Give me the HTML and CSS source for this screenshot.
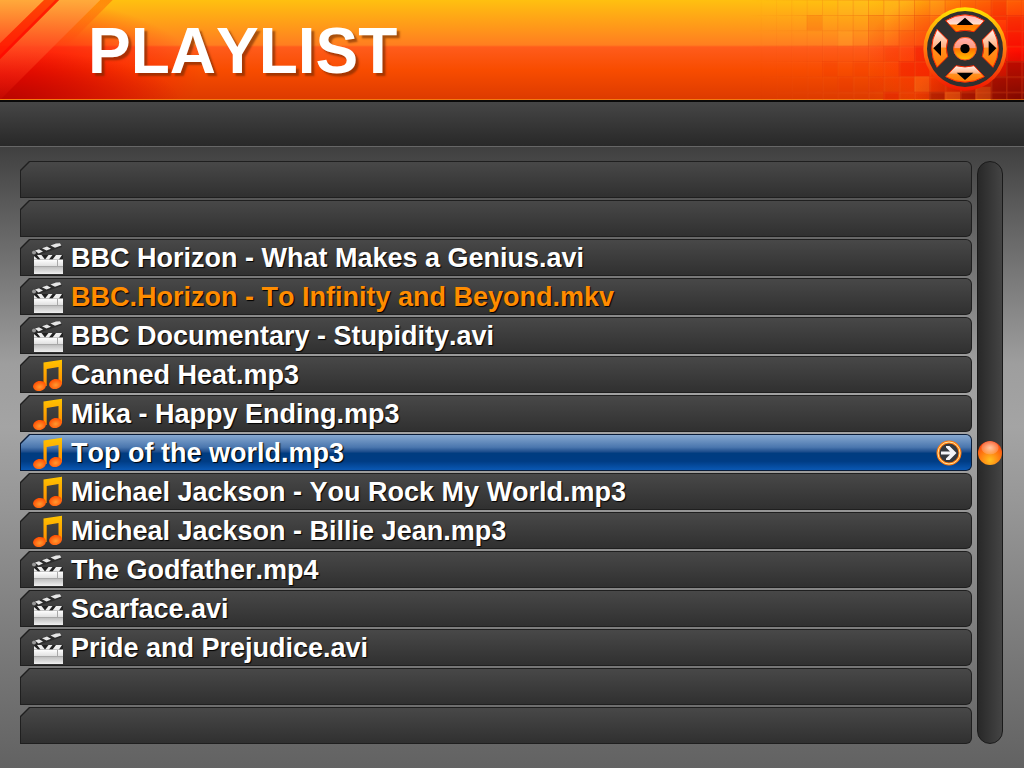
FILE: index.html
```
<!DOCTYPE html>
<html lang="en">

<head>
    <meta charset="UTF-8">
    <meta name="viewport" content="width=device-width, initial-scale=1.0">
    <title>Playlist</title>
    <link rel="stylesheet" href="styles.css">
</head>

<body>
    <!-- shared icons -->
    <svg class="defs" width="0" height="0" aria-hidden="true">
        <defs>
            <linearGradient id="board" x1="0" y1="0" x2="0" y2="1">
                <stop offset="0" stop-color="#fff" />
                <stop offset="0.45" stop-color="#e0e0e0" />
                <stop offset="0.5" stop-color="#bdbdbd" />
                <stop offset="1" stop-color="#f0f0f0" />
            </linearGradient>
            <linearGradient id="note" x1="0" y1="0" x2="0" y2="1">
                <stop offset="0" stop-color="#ffc400" />
                <stop offset="1" stop-color="#ff8a00" />
            </linearGradient>
            <radialGradient id="note-head" cx="0.5" cy="0.6" r="0.6">
                <stop offset="0" stop-color="#ff9a30" />
                <stop offset="1" stop-color="#ff4a00" />
            </radialGradient>
            <linearGradient id="ring" x1="0" y1="0" x2="0" y2="1">
                <stop offset="0" stop-color="#ffe600" />
                <stop offset="0.5" stop-color="#ff7a10" />
                <stop offset="1" stop-color="#f01400" />
            </linearGradient>
            <linearGradient id="key-top" x1="0" y1="0" x2="0" y2="1">
                <stop offset="0" stop-color="#ffb0b0" />
                <stop offset="0.55" stop-color="#ffe0d0" />
                <stop offset="0.6" stop-color="#ff7800" />
                <stop offset="1" stop-color="#ff9000" />
            </linearGradient>
            <linearGradient id="key" x1="0" y1="0" x2="0" y2="1">
                <stop offset="0" stop-color="#fff4f0" />
                <stop offset="0.46" stop-color="#ffb080" />
                <stop offset="0.5" stop-color="#ff9020" />
                <stop offset="1" stop-color="#ff7a00" />
            </linearGradient>
            <linearGradient id="center-key" x1="0" y1="0" x2="0" y2="1">
                <stop offset="0" stop-color="#ffb0b4" />
                <stop offset="0.45" stop-color="#ff9c80" />
                <stop offset="0.5" stop-color="#ff7000" />
                <stop offset="1" stop-color="#ffc400" />
            </linearGradient>
        </defs>
        <symbol id="icon-video" viewBox="0 0 32 33">
            <path d="M2 14L1 10L29 2L31 6L4 15Z" fill="#2c2c2c" />
            <path d="M4 9.500L8 8.200L12 10.500L7.500 12.500ZM11 7.300L16 5.600L20 7.800L15.500 9.600ZM19.500 4.600L25 2.500L29 2.200L30.300 4.500L24 6.800Z" fill="#e6e6e6" />
            <circle cx="3" cy="11.500" r="2" fill="#999" />
            <path d="M3 14H32V19H3Z" fill="#222" />
            <path d="M3 15L7 18.500H3ZM6 14H10.500L14 18.500H9.500ZM14 18.500L17.500 14H21.500L18 18.500ZM25 14H31L28 18.500H21.500Z" fill="#eee" />
            <path d="M3 18.500H32V33H3Z" fill="url(#board)" />
            <path d="M3 25.500H32M26.500 19V25" stroke="#a8a8a8" fill="none" />
        </symbol>
        <symbol id="icon-music" viewBox="0 0 32 33">
            <path d="M12.500 4.500L31 1.700V26H27.500V9L15.700 11V28H12.500Z" fill="url(#note)" />
            <ellipse cx="8.500" cy="28" rx="6.500" ry="5" transform="rotate(-12 8.500 28)" fill="url(#note-head)" />
            <ellipse cx="24.500" cy="26" rx="6.500" ry="5" transform="rotate(-12 24.500 26)" fill="url(#note-head)" />
        </symbol>
    </svg>

    <header class="header">
        <svg class="stripes" viewBox="0 0 420 300" aria-hidden="true">
            <defs>
                <linearGradient id="fade" gradientUnits="userSpaceOnUse" x1="0" y1="0" x2="0" y2="300">
                    <stop offset="0" stop-color="#ffa840" stop-opacity="0.9" />
                    <stop offset="0.45" stop-color="#ff5a28" stop-opacity="0.7" />
                    <stop offset="1" stop-color="#ff2010" stop-opacity="0.1" />
                </linearGradient>
                <linearGradient id="edge" x1="0" y1="0" x2="0" y2="1">
                    <stop offset="0" stop-color="#ff4000" stop-opacity="0.4" />
                    <stop offset="1" stop-color="#ff3000" stop-opacity="0" />
                </linearGradient>
            </defs>
            <path d="M300 0H338L202 137H163Z" fill="url(#edge)" />
            <path d="M0 0H132L0 130Z" fill="url(#fade)" />
            <path d="M132 0H178L0 178V130Z" fill="#ff1800" fill-opacity="0.7" />
            <path d="M166 0H178L0 178V166Z" fill="#ff0000" fill-opacity="0.5" />
            <path d="M178 0H300L0 300V178Z" fill="url(#fade)" />
        </svg>
        <h1 class="title">PLAYLIST</h1>
        <svg class="mosaic" viewBox="0 0 912 300" aria-hidden="true">
            <defs>
                <pattern id="grid" x="30" y="-1" width="46" height="46" patternUnits="userSpaceOnUse">
                    <path d="M0 1H46M1 0V46" stroke="#d82800" stroke-width="2" />
                    <path d="M2 3H46M3 2V46" stroke="#ffa040" stroke-opacity="0.5" stroke-width="2" />
                </pattern>
                <linearGradient id="grid-fade">
                    <stop offset="0.1" stop-color="#000" />
                    <stop offset="0.6" stop-color="#fff" />
                </linearGradient>
                <mask id="grid-mask">
                    <rect width="912" height="300" fill="url(#grid-fade)" />
                </mask>
            </defs>
            <path d="M260 45h46v46h-46zM444 45h46v92h-46zM536 91h46v46h-46zM582 45h46v46h-46zM720 0h46v45h-46zM306 183h46v46h-46zM398 183h46v46h-46zM490 137h46v46h-46zM352 229h46v46h-46zM444 229h46v46h-46zM582 91h46v92h-46zM766 0h46v30h-46z" fill="#f02800" fill-opacity="0.14" />
            <path d="M582 137h46v92h-46zM536 183h46v46h-46zM858 45h54v92h-54zM812 0h46v60h-46zM490 275h46v25h-46z" fill="#e80000" fill-opacity="0.25" />
            <path d="M812 229h100v71h-100zM720 275h46v25h-46zM628 275h46v25h-46zM858 183h54v46h-54z" fill="#600" fill-opacity="0.3" />
            <path d="M352 0h92v45h-92zM490 0h92v45h-92zM628 0h46v45h-46zM352 91h46v46h-46zM674 275h46v25h-46zM582 229h46v46h-46zM766 260h46v40h-46z" fill="#ffc030" fill-opacity="0.2" />
            <rect width="912" height="300" fill="url(#grid)" fill-opacity="0.5" mask="url(#grid-mask)" />
        </svg>
        <svg class="dpad" viewBox="0 0 252 252" aria-hidden="true">
            <circle cx="126" cy="126" r="125" fill="url(#ring)" />
            <circle cx="126" cy="126" r="114" fill="#303030" />
            <g stroke="#ff2a00" stroke-width="3">
                <path d="M68 41Q126 6 184 41L153 74Q126 66 99 74Z" fill="url(#key-top)" />
                <path d="M68 209Q126 242 184 209L153 176Q126 184 99 176Z" fill="url(#key)" />
                <path d="M42 67Q10 126 42 181L74 149Q66 126 74 99Z" fill="url(#key)" />
                <path d="M210 67Q242 126 210 181L178 149Q186 126 178 99Z" fill="url(#key)" />
            </g>
            <path d="M101 54L126 32L151 54ZM101 197L126 219L151 197ZM54 101L31 124L54 147ZM197 101L220 124L197 147Z" fill="#000" />
            <circle cx="126" cy="125" r="34" fill="url(#center-key)" stroke="#ff5a20" stroke-width="3" />
            <circle cx="126" cy="125" r="14" fill="#000" />
        </svg>
    </header>

    <div class="info-bar"></div>

    <main class="content">
        <ul class="playlist">
            <li class="item"></li>
            <li class="item"></li>
            <li class="item"><a href="#"><svg class="icon"><use href="#icon-video" /></svg><span>BBC Horizon - What Makes a Genius.avi</span></a></li>
            <li class="item playing"><a href="#"><svg class="icon"><use href="#icon-video" /></svg><span>BBC.Horizon - To Infinity and Beyond.mkv</span></a></li>
            <li class="item"><a href="#"><svg class="icon"><use href="#icon-video" /></svg><span>BBC Documentary - Stupidity.avi</span></a></li>
            <li class="item"><a href="#"><svg class="icon"><use href="#icon-music" /></svg><span>Canned Heat.mp3</span></a></li>
            <li class="item"><a href="#"><svg class="icon"><use href="#icon-music" /></svg><span>Mika - Happy Ending.mp3</span></a></li>
            <li class="item selected">
                <a href="#"><svg class="icon"><use href="#icon-music" /></svg><span>Top of the world.mp3</span></a>
                <button class="go" type="button" aria-label="Open">
                    <svg viewBox="0 0 26 26">
                        <circle cx="13" cy="13" r="11" fill="#34383e" stroke="#ff7a10" stroke-width="3" />
                        <circle cx="13" cy="13" r="11" fill="none" stroke="#ffe8a0" stroke-width="1" />
                        <path d="M5 11.500H14L10 7.500V6H13.500L20.500 13L13.500 20H10V18.500L14 14.500H5Z" fill="#f4f4f8" />
                    </svg>
                </button>
            </li>
            <li class="item"><a href="#"><svg class="icon"><use href="#icon-music" /></svg><span>Michael Jackson - You Rock My World.mp3</span></a></li>
            <li class="item"><a href="#"><svg class="icon"><use href="#icon-music" /></svg><span>Micheal Jackson - Billie Jean.mp3</span></a></li>
            <li class="item"><a href="#"><svg class="icon"><use href="#icon-video" /></svg><span>The Godfather.mp4</span></a></li>
            <li class="item"><a href="#"><svg class="icon"><use href="#icon-video" /></svg><span>Scarface.avi</span></a></li>
            <li class="item"><a href="#"><svg class="icon"><use href="#icon-video" /></svg><span>Pride and Prejudice.avi</span></a></li>
            <li class="item"></li>
            <li class="item"></li>
        </ul>
        <div class="scrollbar">
            <div class="thumb"></div>
        </div>
    </main>
</body>

</html>
```
FILE: styles.css
```
* {
    box-sizing: border-box;
}

body {
    margin: 0;
    min-height: 100vh;
    display: flex;
    flex-direction: column;
    background: #666;
    color: #fff;
    font-family: "Liberation Sans", Arial, sans-serif;
    font-kerning: none;
}

.defs {
    position: absolute;
}

/* header */
.header {
    position: relative;
    display: flex;
    align-items: center;
    justify-content: space-between;
    height: 102px;
    padding: 0 17px 2px 88px;
    border-bottom: 2px solid #0a0a0a;
    background:
        linear-gradient(#f57a10, #f57a10) bottom / 100% 1px no-repeat,
        radial-gradient(ellipse 180px 50px at 0 100%, rgba(170, 0, 0, 0.8), rgba(170, 0, 0, 0)),
        radial-gradient(ellipse 200px 80px at 0 75%, rgba(255, 0, 0, 0.9), rgba(255, 0, 0, 0)),
        radial-gradient(ellipse 110px 50px at 100% 100%, rgba(110, 0, 0, 0.8), rgba(110, 0, 0, 0)),
        radial-gradient(ellipse 160px 80px at 100% 55%, rgba(255, 0, 0, 0.9), rgba(255, 0, 0, 0)),
        linear-gradient(to right, rgba(255, 100, 0, 0) 85%, rgba(255, 100, 0, 0.7)),
        linear-gradient(#ffc010, #ff7e20 45%, #ff5c1c 47%, #f84c00 70%, #dc3a00);
}

.stripes,
.mosaic {
    position: absolute;
    top: 0;
    height: 100px;
}

.stripes {
    left: 0;
    width: 140px;
}

.mosaic {
    right: 0;
    width: 304px;
}

.title {
    position: relative;
    margin: 0;
    padding-top: 4px;
    font-size: 64px;
    line-height: 72px;
    text-shadow: 3px 3px 2px rgba(110, 40, 0, 0.6);
}

.dpad {
    position: relative;
    width: 84px;
    height: 84px;
}

.info-bar {
    height: 45px;
    border-bottom: 1px solid #666;
    background: linear-gradient(#464646, #282828);
}

/* list */
.content {
    flex: 1;
    display: flex;
    gap: 5px;
    padding: 14px 21px 24px 20px;
    background: linear-gradient(#404040, #5c5c5c 10%, #9e9e9e 35%, #a4a4a4 45%, #969696 58%, #626262);
}

.playlist {
    flex: 1;
    display: flex;
    flex-direction: column;
    gap: 2px;
    margin: 0;
    padding: 0;
    list-style: none;
}

.item {
    position: relative;
    display: flex;
    align-items: center;
    height: 37px;
    padding: 0 10px 0 11px;
    border-radius: 0 6px 6px 0;
    background: #1f1f1f;
    clip-path: polygon(0 9px, 9px 0, 100% 0, 100% 100%, 0 100%);
}

.item::before {
    content: "";
    position: absolute;
    inset: 1px;
    border-radius: 0 5px 5px 0;
    background: linear-gradient(#484848, #303030);
    clip-path: polygon(0 9px, 9px 0, 100% 0, 100% 100%, 0 100%);
}

.item a {
    position: relative;
    flex: 1;
    display: flex;
    align-items: center;
    gap: 8px;
    color: #fff;
    font-size: 27px;
    font-weight: bold;
    line-height: 32px;
    text-decoration: none;
    text-shadow: 1px 1px 1px #000;
}

.item.playing a {
    color: #ff8c00;
}

.item.selected {
    background: #0a1c38;
}

.item.selected::before {
    background: linear-gradient(#86a8d0, #4a76ae 35%, #1c4c8c 48%, #003c80 52%, #003c84 75%, #0a58b4);
}

.icon {
    width: 32px;
    height: 33px;
}

.go {
    position: relative;
    width: 26px;
    height: 26px;
    padding: 0;
    border: 0;
    background: none;
    cursor: pointer;
}

.go svg {
    display: block;
}

.scrollbar {
    display: flex;
    align-items: center;
    justify-content: center;
    width: 26px;
    border: 1px solid #1a1a1a;
    border-radius: 13px;
    background: linear-gradient(to right, #282828, #444);
}

.thumb {
    width: 24px;
    height: 24px;
    border-radius: 50%;
    background:
        radial-gradient(ellipse 9px 7px at 50% 28%, rgba(255, 220, 200, 0.8), rgba(255, 180, 150, 0.4) 90%, transparent),
        radial-gradient(circle at 50% 80%, #ffc020, #ff7a10 45%, #f84410 80%);
}
```
